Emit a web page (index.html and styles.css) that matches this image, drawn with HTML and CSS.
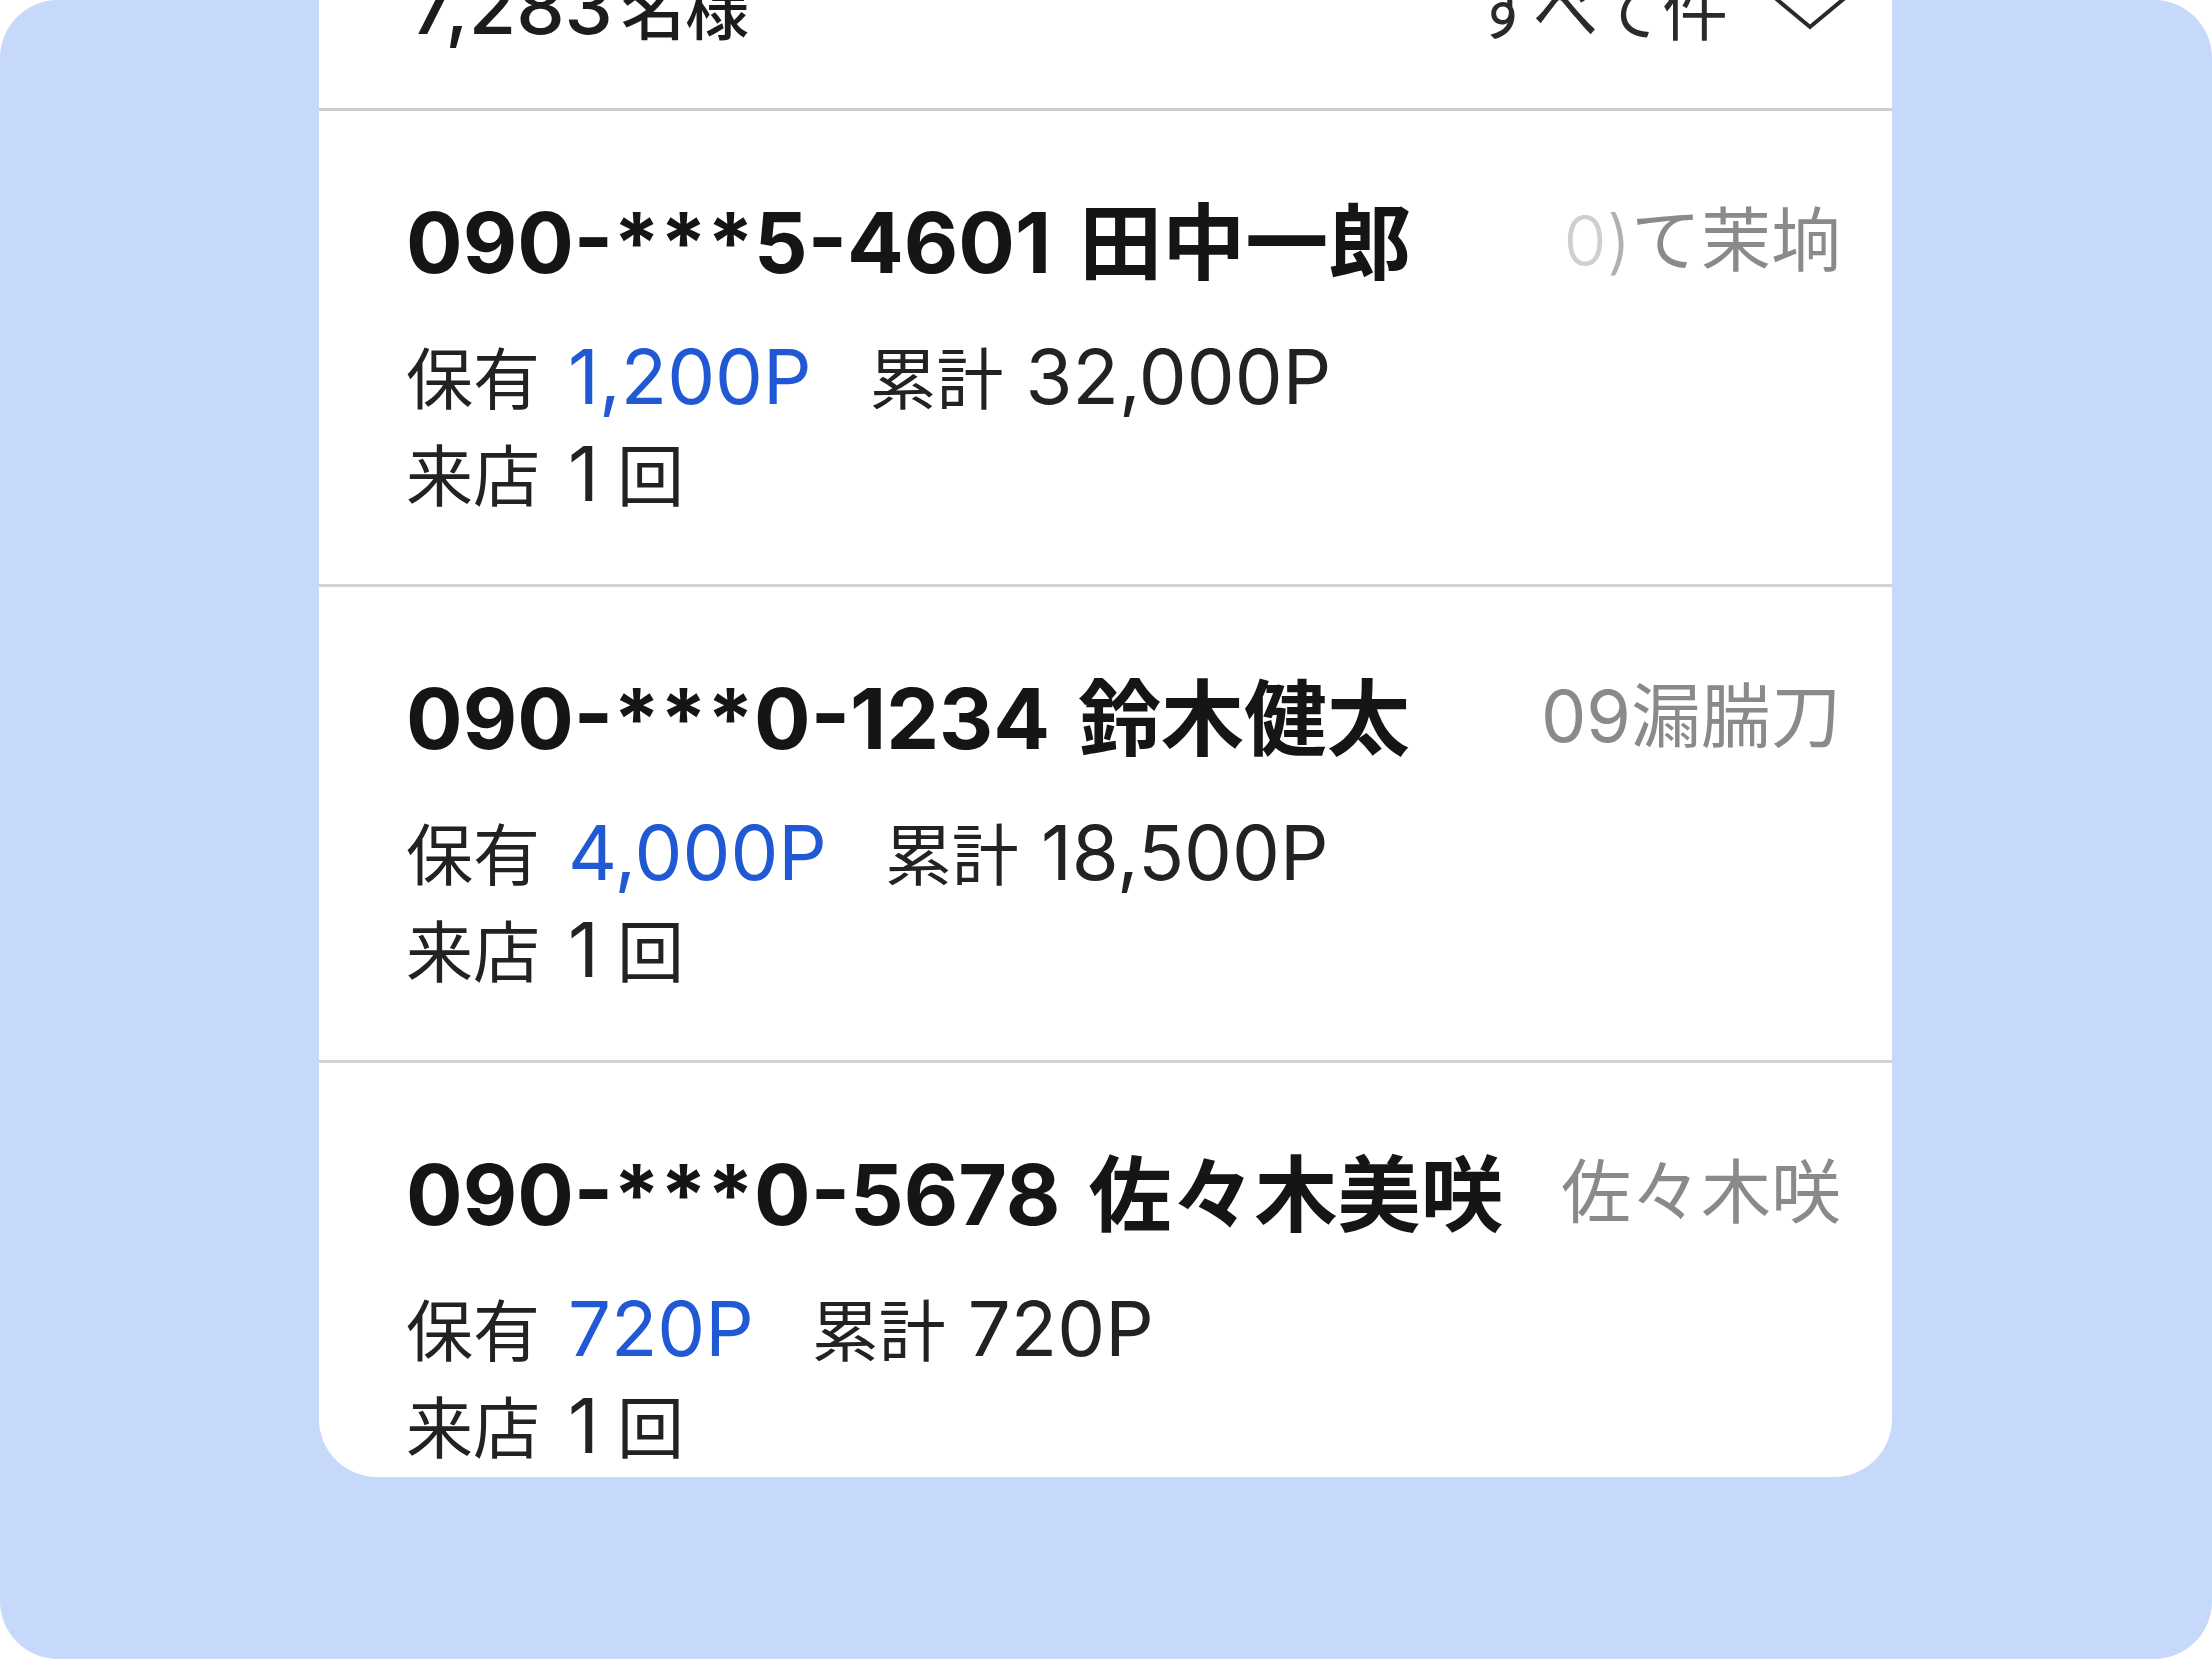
FILE: index.html
```html
<!DOCTYPE html>
<html lang="ja">
<head>
<meta charset="utf-8">
<title>顧客一覧</title>
<link rel="stylesheet" href="styles.css">
</head>
<body>
<div class="frame">
  <div class="card">
    <div class="header">
      <div class="header-inner">
        <span class="count"><span class="cnum">7,283</span><span class="ckan">名様</span></span>
        <span class="filter"><span class="ftext">すべて件</span>
          <svg class="chev" viewBox="0 0 76 36" width="76" height="36"><path d="M2 2 L38 32 L74 2" fill="none" stroke="#2a2a2a" stroke-width="4"/></svg>
        </span>
      </div>
    </div>
    <div class="row">
      <div class="top">
        <span class="title"><span class="tnum">090-***5-4601</span><span class="tkan">田中一郎</span></span>
        <span class="ghost"><span class="g1">0</span><span class="g2">)</span>て茉垧</span>
      </div>
      <div class="line"><span class="lbl">保有</span><span class="pts">1,200P</span><span class="lbl gap">累計</span><span class="num">32,000P</span></div>
      <div class="line"><span class="lbl">来店</span><span class="num">1</span><span class="lbl unit">回</span></div>
    </div>
    <div class="row">
      <div class="top">
        <span class="title"><span class="tnum">090-***0-1234</span><span class="tkan">鈴木健太</span></span>
        <span class="ghost"><span class="gnum">09</span>漏腨刀</span>
      </div>
      <div class="line"><span class="lbl">保有</span><span class="pts">4,000P</span><span class="lbl gap">累計</span><span class="num">18,500P</span></div>
      <div class="line"><span class="lbl">来店</span><span class="num">1</span><span class="lbl unit">回</span></div>
    </div>
    <div class="row last">
      <div class="top">
        <span class="title"><span class="tnum">090-***0-5678</span><span class="tkan">佐々木美咲</span></span>
        <span class="ghost">佐々木咲</span>
      </div>
      <div class="line"><span class="lbl">保有</span><span class="pts">720P</span><span class="lbl gap">累計</span><span class="num">720P</span></div>
      <div class="line"><span class="lbl">来店</span><span class="num">1</span><span class="lbl unit">回</span></div>
    </div>
  </div>
</div>
</body>
</html>
```
FILE: styles.css
```css
* { box-sizing: border-box; }
html, body { margin: 0; padding: 0; background: #ffffff; }
body {
  font-family: "Noto Sans CJK JP", "Noto Sans", sans-serif;
  color: #1c1c1c;
}
.frame {
  width: 2212px;
  height: 1659px;
  background: #c6d9fb;
  border-radius: 58px;
  overflow: hidden;
  padding-left: 319px;
}
.card {
  width: 1573px;
  height: 1477px;
  background: #ffffff;
  border-radius: 0 0 58px 58px;
  overflow: hidden;
}
.header {
  height: 111px;
  border-bottom: 3px solid #cdcdcd;
  padding: 0 44px 0 92px;
  overflow: hidden;
}
.header-inner {
  display: flex;
  justify-content: space-between;
  align-items: flex-end;
  margin-top: -50px;
  height: 112px;
}
.count {
  display: flex;
  align-items: baseline;
  line-height: 112px;
}
.cnum {
  font-family: "Inter", "Noto Sans CJK JP", sans-serif;
  font-size: 77px;
  font-weight: 500;
}
.ckan { font-size: 64px; font-weight: 500; margin-left: 8px; }
.filter {
  display: flex;
  align-items: flex-end;
  gap: 44px;
}
.ftext {
  font-size: 66px;
  color: #2a2a2a;
  line-height: 112px;
}
.chev { display: block; margin-bottom: 31px; }
.row {
  height: 476px;
  border-bottom: 3px solid #d3d3d3;
  padding: 66px 51px 0 87px;
}
.row.last { border-bottom: none; }
.top {
  display: flex;
  justify-content: space-between;
  align-items: flex-start;
  height: 116px;
}
.title {
  display: flex;
  align-items: baseline;
  font-weight: 700;
  color: #151515;
  white-space: nowrap;
}
.tnum {
  font-family: "Inter", "Noto Sans CJK JP", sans-serif;
  font-size: 84px;
  font-weight: 700;
}
.tkan { font-size: 83px; margin-left: 28px; }
.ghost {
  display: flex;
  align-items: baseline;
  margin-top: 8px;
  font-size: 70px;
  color: #8a8a8a;
  white-space: nowrap;
}
.g1 { font-family: "Inter", sans-serif; font-weight: 300; color: #cfcfcf; }
.g2 { font-family: "Inter", sans-serif; font-weight: 300; color: #b0b0b0; }
.gnum { font-family: "Inter", sans-serif; font-weight: 400; font-size: 72px; }
.line {
  display: flex;
  align-items: baseline;
  font-size: 67px;
  line-height: 96px;
  color: #222;
  white-space: nowrap;
}
.top + .line { margin-top: 34px; }
.num, .pts {
  font-family: "Inter", "Noto Sans CJK JP", sans-serif;
  font-size: 76px;
  font-weight: 400;
}
.lbl + .num, .lbl + .pts { margin-left: 28px; }
.gap + .num { margin-left: 22px; }
.pts { color: #2158d4; }
.gap { margin-left: 58px; }
.unit { margin-left: 18px; }
```
